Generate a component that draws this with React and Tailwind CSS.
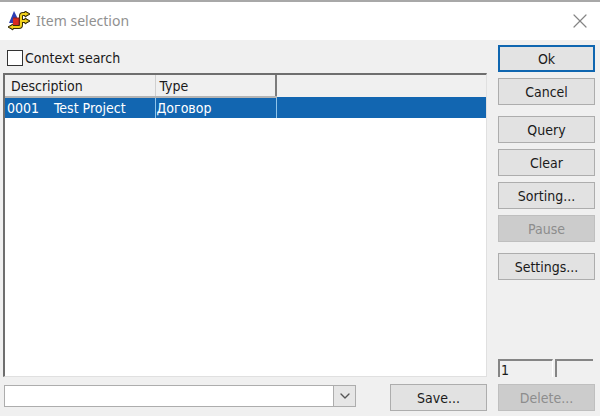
import React, { useState } from 'react';
import { X, ChevronDown } from 'lucide-react';

const columns = ['Description', 'Type'];

const rows = [{ id: '0001', name: 'Test Project', type: 'Договор' }];

const actionGroups = [
  [{ label: 'Ok', primary: true }, { label: 'Cancel' }],
  [{ label: 'Query' }, { label: 'Clear' }, { label: 'Sorting...' }, { label: 'Pause', disabled: true }],
  [{ label: 'Settings...' }],
];

const DialogButton = ({ label, primary, disabled }) => (
  <button
    type="button"
    disabled={disabled}
    className={`h-[27px] w-[97px] shrink-0 text-center leading-5 ${
      primary
        ? 'border-2 border-[#0f66b0] bg-[#e3e3e3]'
        : 'border border-[#adadad] bg-[#e2e2e2] disabled:border-[#bfbfbf] disabled:bg-[#cccccc] disabled:text-[#8d8d8d]'
    }`}
  >
    {label}
  </button>
);

const AppIcon = () => (
  <svg viewBox="0 0 22 20" className="h-5 w-[22px]" aria-hidden="true">
    <path d="M6 0 L9 6 V12 H1 Z" fill="#2c3fb4" />
    <path
      d="M19 3 H15 Q13 3 13 5 V14 Q13 16 11 16 H4 M13 10 H19"
      fill="none"
      stroke="#3a3008"
      strokeWidth="4"
    />
    <path d="M17 0 L22 3 L17 6 Z M17 7 L22 10 L17 13 Z M5 13 L0 16 L5 19 Z" fill="#3a3008" stroke="#3a3008" />
    <path d="M18 3 H15 Q13 3 13 5 V14 Q13 16 11 16 H4 M13 10 H18" fill="none" stroke="#f2d21c" strokeWidth="2" />
    <path d="M17 1 L21 3 L17 5 Z M17 8 L21 10 L17 12 Z M5 14 L1 16 L5 18 Z" fill="#f2d21c" />
    <rect x="5" y="7" width="6" height="7" fill="#d92a20" />
    <path d="M5 7 H11 V14" fill="none" stroke="#8e1c1c" strokeWidth="1" />
  </svg>
);

const App = () => {
  const [contextSearch, setContextSearch] = useState(false);

  return (
    <div className="flex min-h-screen flex-col bg-[#f0f0f0] font-['DejaVu_Sans_Condensed','DejaVu_Sans',sans-serif] text-sm text-[#1a1a1a]">
      {/* Title bar */}
      <header className="flex h-10 items-center border-t-2 border-[#a8a8a8] bg-white pr-2 pl-2">
        <AppIcon />
        <h1 className="ml-1.5 flex-1 font-['Noto_Sans',sans-serif] text-sm text-[#919191]">Item selection</h1>
        <button type="button" aria-label="Close" className="text-[#858585]">
          <X className="h-6 w-6" strokeWidth={1.2} />
        </button>
      </header>

      <main className="flex flex-1 flex-col gap-[7px] pt-[5px] pr-[5px] pb-[5px] pl-[3px]">
        <div className="flex flex-1 gap-[11px]">
          <div className="flex flex-1 flex-col">
            <label className="flex h-7 items-center gap-0.5 pl-1 pb-0.5">
              <input
                type="checkbox"
                checked={contextSearch}
                onChange={(e) => setContextSearch(e.target.checked)}
                className="h-4 w-4 appearance-none border border-[#333333] bg-white checked:bg-[#0f66b0]"
              />
              Context search
            </label>

            {/* Item list */}
            <div className="flex-1 border-t-2 border-r border-b border-l-2 border-t-[#6e6e6e] border-r-[#e0e0e0] border-b-[#e0e0e0] border-l-[#6e6e6e] bg-white">
              <table className="w-full table-fixed border-collapse text-left">
                <thead>
                  <tr className="h-[22px] bg-[#f0f0f0]">
                    {columns.map((column, i) => (
                      <th
                        key={column}
                        className={`border-b-2 border-b-[#b4b4b4] p-0 leading-5 font-normal ${
                          i === 0
                            ? 'w-[150px] border-r border-r-[#d0d0d0] pl-1.5'
                            : 'w-[121px] border-r-2 border-r-[#7c7c7c] pl-1'
                        }`}
                      >
                        {column}
                      </th>
                    ))}
                    <th className="p-0" />
                  </tr>
                </thead>
                <tbody>
                  {rows.map((row) => (
                    <tr key={row.id} className="h-[21px] bg-[#1266b1] text-white">
                      <td className="border-r border-[#8fc4ea] p-0 pl-0.5 leading-5">
                        <span className="inline-block w-[47px]">{row.id}</span>
                        {row.name}
                      </td>
                      <td className="border-r border-[#8fc4ea] p-0 pl-px leading-5">{row.type}</td>
                      <td className="p-0" />
                    </tr>
                  ))}
                </tbody>
              </table>
            </div>
          </div>

          {/* Actions */}
          <div className="flex w-[97px] flex-col gap-[11px]">
            {actionGroups.map((group, i) => (
              <div key={i} className="flex flex-col gap-1.5">
                {group.map((action) => (
                  <DialogButton key={action.label} {...action} />
                ))}
              </div>
            ))}
            <div className="mt-auto flex gap-0.5 pr-0.5">
              <output className="h-[18px] w-[55px] border-t-2 border-r border-l-2 border-t-[#858585] border-r-white border-l-[#858585] pl-px leading-[18px]">
                {rows.length}
              </output>
              <output className="h-[18px] flex-1 border-t-2 border-l-2 border-[#858585]" />
            </div>
          </div>
        </div>

        {/* Saved queries */}
        <div className="flex items-start gap-[11px]">
          <div className="relative mr-[23px] flex-1 pt-px pl-px">
            <select
              aria-label="Saved query"
              defaultValue=""
              className="block h-[22px] w-full appearance-none border border-[#adadad] bg-white pr-6 pl-1"
            >
              <option value="" />
            </select>
            <span className="pointer-events-none absolute right-0 bottom-0 flex h-[22px] w-[23px] items-center justify-center border border-[#adadad] bg-[#e6e6e6]">
              <ChevronDown className="h-4 w-4 text-[#555555]" strokeWidth={2} />
            </span>
          </div>
          <DialogButton label="Save..." />
          <DialogButton label="Delete..." disabled />
        </div>
      </main>
    </div>
  );
};

export default App;
